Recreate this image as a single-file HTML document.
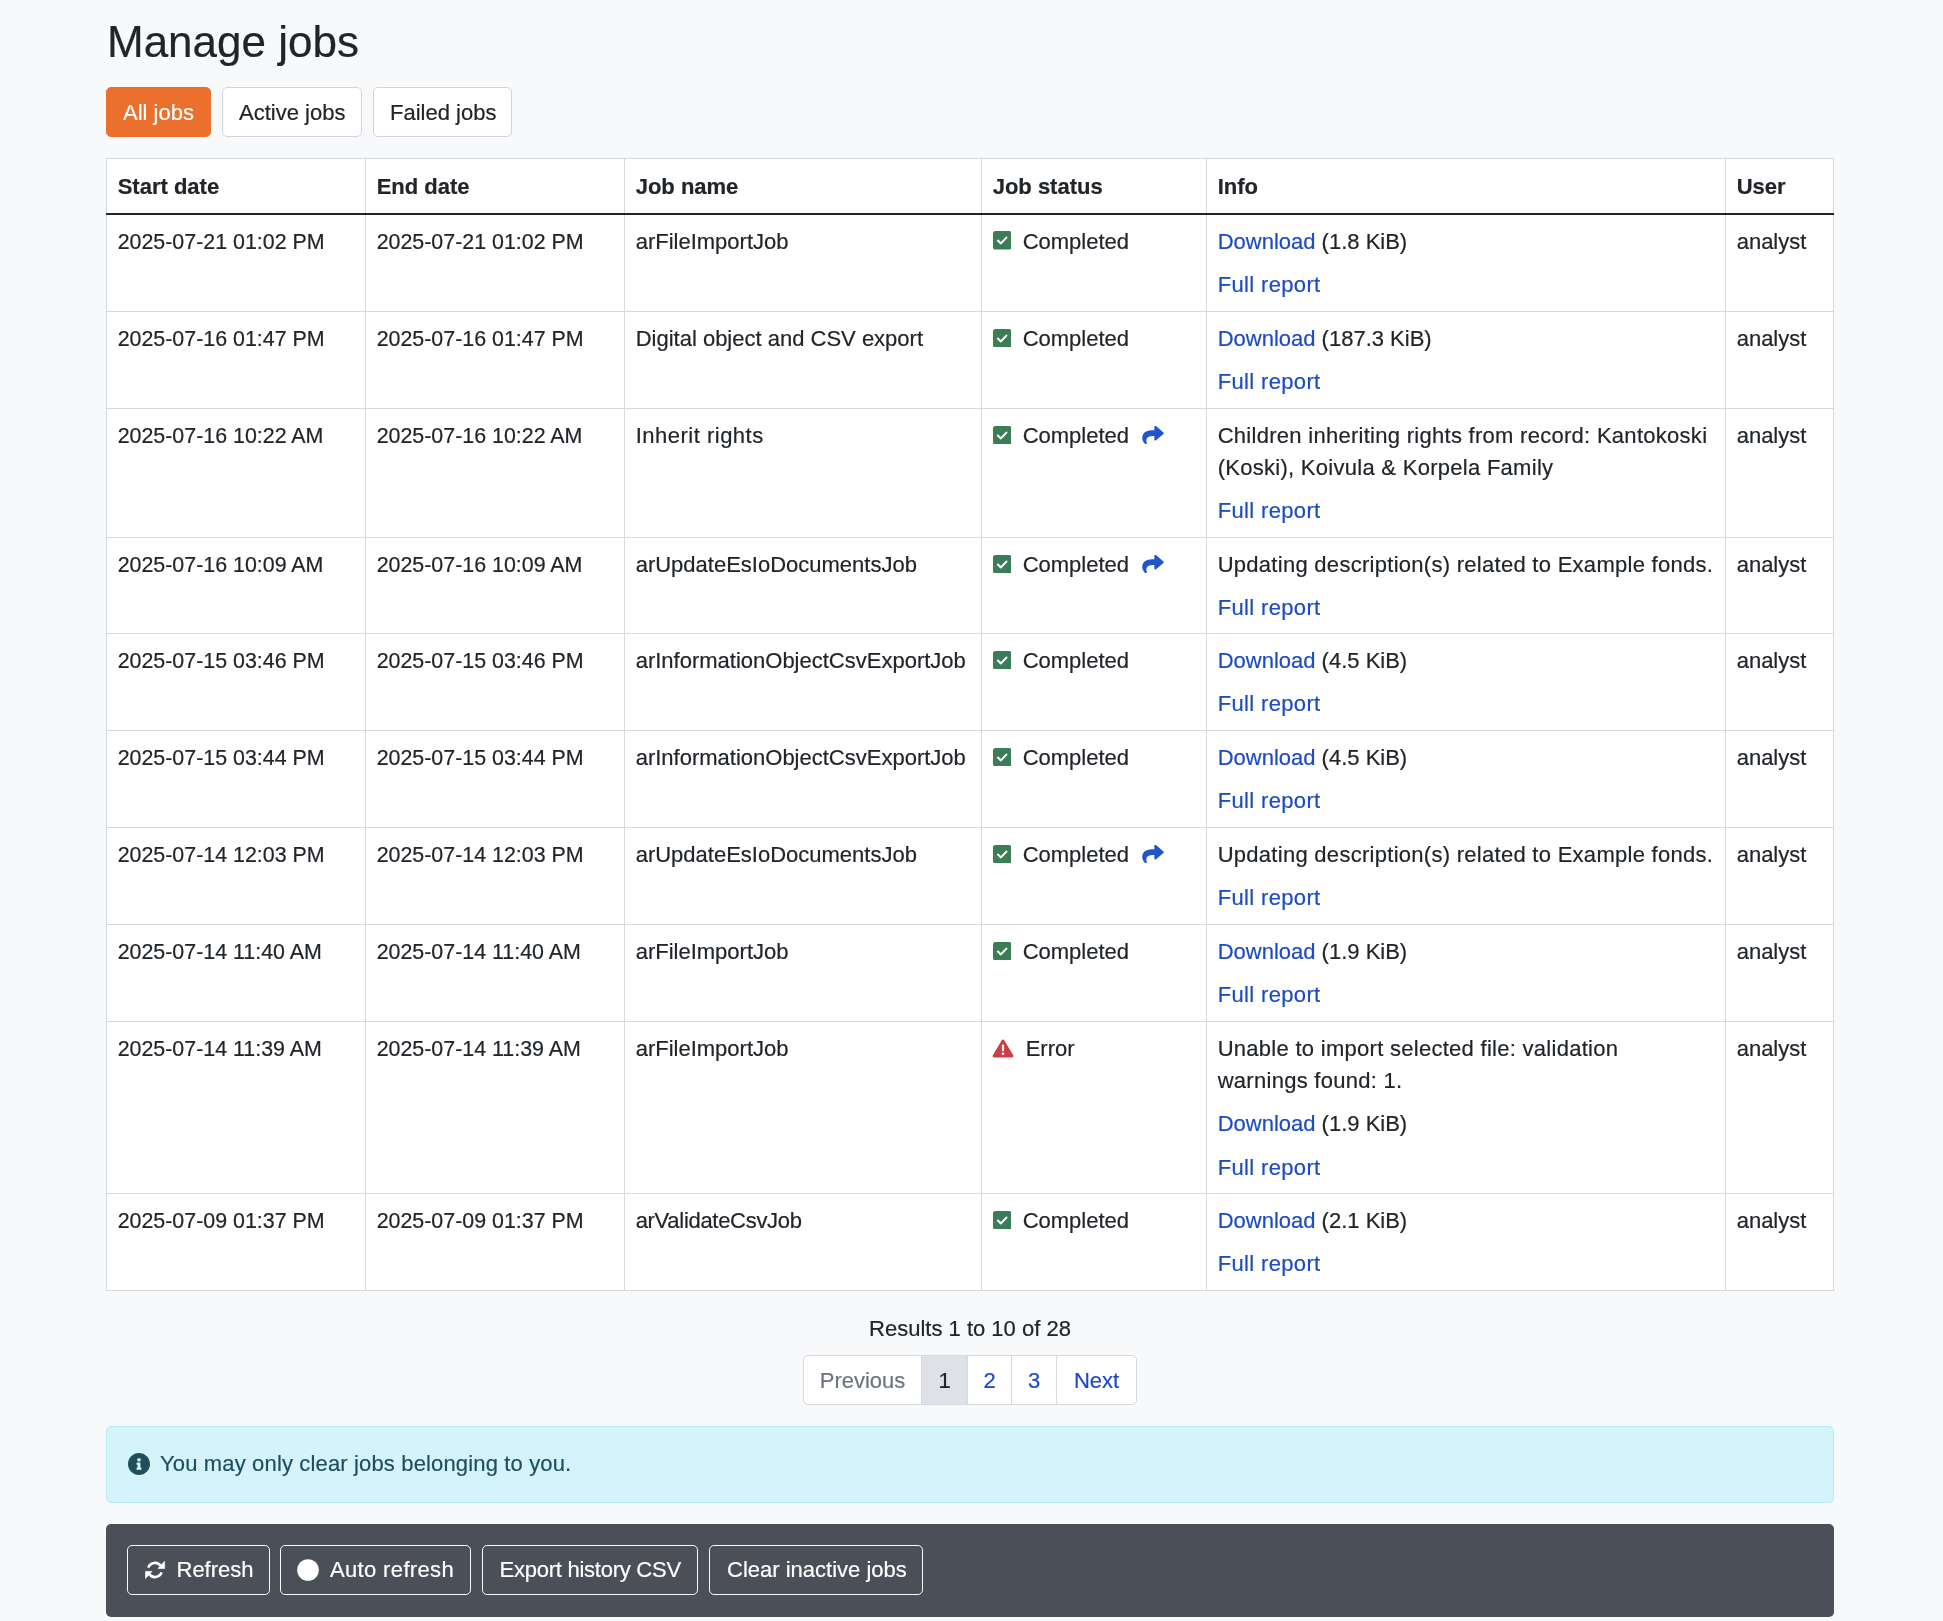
<!DOCTYPE html>
<html>
<head>
<meta charset="utf-8">
<style>
html,body{margin:0;padding:0}
body{will-change:transform;width:1943px;height:1621px;background:#f8f9fa;color:#212529;font-family:"Liberation Sans",sans-serif;font-size:22px;line-height:32px;position:relative;overflow:hidden;-webkit-text-stroke:0.2px currentColor}
.abs{position:absolute}
a{color:#1c4bc3;text-decoration:none}
h1{position:absolute;left:107px;top:12px;margin:0;font-weight:400;font-size:44px;line-height:60px;color:#212529;white-space:nowrap}
.btn{position:absolute;box-sizing:border-box;height:50px;border:1px solid #ced4da;border-radius:5px;background:#fff;line-height:50px;white-space:nowrap}
.btn.active{background:#ec702d;border-color:#ec702d;color:#fff}
.tbl{position:absolute;left:106px;top:158px;border-collapse:collapse;table-layout:fixed;background:#fff}
.tbl td,.tbl th{border:1px solid #d5dadf;padding:11.4px 10.67px 0 10.67px;vertical-align:top;text-align:left;white-space:nowrap}
.tbl th{font-weight:700;border-bottom:2px solid #212529;padding-top:11.67px}
.tbl td.d{font-size:21.4px}
.tbl .it{margin-top:11.1px}
.tbl .it:first-child{margin-top:0}
.msg{letter-spacing:0.28px}
.fr{letter-spacing:0.35px}
.st{position:relative;padding-left:30px}
.st.e{padding-left:33px}
.ico{position:absolute;display:block}
.chk{left:0;top:5.4px}
.err{left:-0.7px;top:5.9px}
.shr{position:relative;display:inline-block;vertical-align:top;left:13px;top:5.4px}
.results{position:absolute;left:106px;width:1728px;top:1313px;text-align:center}
.pg{position:absolute;top:1355px;height:50px;box-sizing:border-box;border:1px solid #d5dadf;background:#fff;line-height:50px;text-align:center}
.alert{position:absolute;left:106px;top:1426px;width:1728px;height:77px;box-sizing:border-box;background:#d4f3fb;border:1px solid #b8ebf7;border-radius:5px;color:#1f4f5e}
.bar{position:absolute;left:106px;top:1524px;width:1728px;height:93px;background:#4b4f58;border-radius:5px}
.obtn{position:absolute;top:1545px;height:50px;box-sizing:border-box;border:1px solid #f8f9fa;border-radius:5px;color:#fff;line-height:48px;white-space:nowrap}
</style>
</head>
<body>
<h1>Manage jobs</h1>

<div class="btn active" style="left:106px;top:87px;width:105px;padding-left:16px">All jobs</div>
<div class="btn" style="left:222px;top:87px;width:140px;padding-left:16px">Active jobs</div>
<div class="btn" style="left:373px;top:87px;width:139px;padding-left:16px">Failed jobs</div>

<table class="tbl" style="width:1727px">
<colgroup>
<col style="width:259px"><col style="width:259px"><col style="width:357px"><col style="width:225px"><col style="width:519px"><col style="width:108px">
</colgroup>
<thead>
<tr style="height:55px"><th>Start date</th><th>End date</th><th>Job name</th><th>Job status</th><th>Info</th><th>User</th></tr>
</thead>
<tbody>
<tr style="height:98px"><td class="d">2025-07-21 01:02 PM</td><td class="d">2025-07-21 01:02 PM</td><td>arFileImportJob</td><td><div class="st"><svg class="ico chk" width="18.5" height="18.5" viewBox="0 0 18.5 18.5"><rect x="0" y="0" width="18.5" height="18.5" rx="2.6" fill="#3b7d54"/><path d="M4.9 9.6 L7.9 12.4 L13.4 6.6" fill="none" stroke="#fff" stroke-width="2.1" stroke-linecap="round" stroke-linejoin="round"/></svg>Completed</div></td><td><div class="it"><a>Download</a> (1.8 KiB)</div><div class="it"><a class="fr">Full report</a></div></td><td>analyst</td></tr>
<tr style="height:97px"><td class="d">2025-07-16 01:47 PM</td><td class="d">2025-07-16 01:47 PM</td><td>Digital object and CSV export</td><td><div class="st"><svg class="ico chk" width="18.5" height="18.5" viewBox="0 0 18.5 18.5"><rect x="0" y="0" width="18.5" height="18.5" rx="2.6" fill="#3b7d54"/><path d="M4.9 9.6 L7.9 12.4 L13.4 6.6" fill="none" stroke="#fff" stroke-width="2.1" stroke-linecap="round" stroke-linejoin="round"/></svg>Completed</div></td><td><div class="it"><a>Download</a> (187.3 KiB)</div><div class="it"><a class="fr">Full report</a></div></td><td>analyst</td></tr>
<tr style="height:129px"><td class="d">2025-07-16 10:22 AM</td><td class="d">2025-07-16 10:22 AM</td><td style="letter-spacing:0.5px">Inherit rights</td><td><div class="st"><svg class="ico chk" width="18.5" height="18.5" viewBox="0 0 18.5 18.5"><rect x="0" y="0" width="18.5" height="18.5" rx="2.6" fill="#3b7d54"/><path d="M4.9 9.6 L7.9 12.4 L13.4 6.6" fill="none" stroke="#fff" stroke-width="2.1" stroke-linecap="round" stroke-linejoin="round"/></svg>Completed<svg class="ico shr" width="22" height="18.5" viewBox="0 0 512 440"><path transform="translate(0,-37)" d="M503.691 189.836L327.687 37.851C312.281 24.546 288 35.347 288 56.015v80.053C127.371 137.907 0 170.1 0 322.326c0 61.441 39.581 122.309 83.333 154.132 13.653 9.931 33.111-2.533 28.077-18.631C66.066 312.814 132.917 274.316 288 272.085V360c0 20.7 24.3 31.453 39.687 18.164l176.004-152c11.071-9.562 11.086-26.753 0-36.328z" fill="#2155cc"/></svg></div></td><td><div class="it msg">Children inheriting rights from record: Kantokoski<br>(Koski), Koivula &amp; Korpela Family</div><div class="it"><a class="fr">Full report</a></div></td><td>analyst</td></tr>
<tr style="height:96px"><td class="d">2025-07-16 10:09 AM</td><td class="d">2025-07-16 10:09 AM</td><td>arUpdateEsIoDocumentsJob</td><td><div class="st"><svg class="ico chk" width="18.5" height="18.5" viewBox="0 0 18.5 18.5"><rect x="0" y="0" width="18.5" height="18.5" rx="2.6" fill="#3b7d54"/><path d="M4.9 9.6 L7.9 12.4 L13.4 6.6" fill="none" stroke="#fff" stroke-width="2.1" stroke-linecap="round" stroke-linejoin="round"/></svg>Completed<svg class="ico shr" width="22" height="18.5" viewBox="0 0 512 440"><path transform="translate(0,-37)" d="M503.691 189.836L327.687 37.851C312.281 24.546 288 35.347 288 56.015v80.053C127.371 137.907 0 170.1 0 322.326c0 61.441 39.581 122.309 83.333 154.132 13.653 9.931 33.111-2.533 28.077-18.631C66.066 312.814 132.917 274.316 288 272.085V360c0 20.7 24.3 31.453 39.687 18.164l176.004-152c11.071-9.562 11.086-26.753 0-36.328z" fill="#2155cc"/></svg></div></td><td><div class="it msg">Updating description(s) related to Example fonds.</div><div class="it"><a class="fr">Full report</a></div></td><td>analyst</td></tr>
<tr style="height:97px"><td class="d">2025-07-15 03:46 PM</td><td class="d">2025-07-15 03:46 PM</td><td>arInformationObjectCsvExportJob</td><td><div class="st"><svg class="ico chk" width="18.5" height="18.5" viewBox="0 0 18.5 18.5"><rect x="0" y="0" width="18.5" height="18.5" rx="2.6" fill="#3b7d54"/><path d="M4.9 9.6 L7.9 12.4 L13.4 6.6" fill="none" stroke="#fff" stroke-width="2.1" stroke-linecap="round" stroke-linejoin="round"/></svg>Completed</div></td><td><div class="it"><a>Download</a> (4.5 KiB)</div><div class="it"><a class="fr">Full report</a></div></td><td>analyst</td></tr>
<tr style="height:97px"><td class="d">2025-07-15 03:44 PM</td><td class="d">2025-07-15 03:44 PM</td><td>arInformationObjectCsvExportJob</td><td><div class="st"><svg class="ico chk" width="18.5" height="18.5" viewBox="0 0 18.5 18.5"><rect x="0" y="0" width="18.5" height="18.5" rx="2.6" fill="#3b7d54"/><path d="M4.9 9.6 L7.9 12.4 L13.4 6.6" fill="none" stroke="#fff" stroke-width="2.1" stroke-linecap="round" stroke-linejoin="round"/></svg>Completed</div></td><td><div class="it"><a>Download</a> (4.5 KiB)</div><div class="it"><a class="fr">Full report</a></div></td><td>analyst</td></tr>
<tr style="height:97px"><td class="d">2025-07-14 12:03 PM</td><td class="d">2025-07-14 12:03 PM</td><td>arUpdateEsIoDocumentsJob</td><td><div class="st"><svg class="ico chk" width="18.5" height="18.5" viewBox="0 0 18.5 18.5"><rect x="0" y="0" width="18.5" height="18.5" rx="2.6" fill="#3b7d54"/><path d="M4.9 9.6 L7.9 12.4 L13.4 6.6" fill="none" stroke="#fff" stroke-width="2.1" stroke-linecap="round" stroke-linejoin="round"/></svg>Completed<svg class="ico shr" width="22" height="18.5" viewBox="0 0 512 440"><path transform="translate(0,-37)" d="M503.691 189.836L327.687 37.851C312.281 24.546 288 35.347 288 56.015v80.053C127.371 137.907 0 170.1 0 322.326c0 61.441 39.581 122.309 83.333 154.132 13.653 9.931 33.111-2.533 28.077-18.631C66.066 312.814 132.917 274.316 288 272.085V360c0 20.7 24.3 31.453 39.687 18.164l176.004-152c11.071-9.562 11.086-26.753 0-36.328z" fill="#2155cc"/></svg></div></td><td><div class="it msg">Updating description(s) related to Example fonds.</div><div class="it"><a class="fr">Full report</a></div></td><td>analyst</td></tr>
<tr style="height:97px"><td class="d">2025-07-14 11:40 AM</td><td class="d">2025-07-14 11:40 AM</td><td>arFileImportJob</td><td><div class="st"><svg class="ico chk" width="18.5" height="18.5" viewBox="0 0 18.5 18.5"><rect x="0" y="0" width="18.5" height="18.5" rx="2.6" fill="#3b7d54"/><path d="M4.9 9.6 L7.9 12.4 L13.4 6.6" fill="none" stroke="#fff" stroke-width="2.1" stroke-linecap="round" stroke-linejoin="round"/></svg>Completed</div></td><td><div class="it"><a>Download</a> (1.9 KiB)</div><div class="it"><a class="fr">Full report</a></div></td><td>analyst</td></tr>
<tr style="height:172px"><td class="d">2025-07-14 11:39 AM</td><td class="d">2025-07-14 11:39 AM</td><td>arFileImportJob</td><td><div class="st e"><svg class="ico err" width="22" height="19" viewBox="0 0 22 19"><path d="M11 0.6 C11.6 0.6 12.1 0.9 12.4 1.4 L21.2 16.3 C21.8 17.4 21.1 18.6 19.8 18.6 L2.2 18.6 C0.9 18.6 0.2 17.4 0.8 16.3 L9.6 1.4 C9.9 0.9 10.4 0.6 11 0.6 Z" fill="#cc3e48"/><rect x="9.9" y="5.6" width="2.2" height="6.6" rx="1" fill="#fff"/><circle cx="11" cy="14.7" r="1.3" fill="#fff"/></svg>Error</div></td><td><div class="it msg">Unable to import selected file: validation<br>warnings found: 1.</div><div class="it"><a>Download</a> (1.9 KiB)</div><div class="it"><a class="fr">Full report</a></div></td><td>analyst</td></tr>
<tr style="height:97px"><td class="d">2025-07-09 01:37 PM</td><td class="d">2025-07-09 01:37 PM</td><td style="letter-spacing:-0.3px">arValidateCsvJob</td><td><div class="st"><svg class="ico chk" width="18.5" height="18.5" viewBox="0 0 18.5 18.5"><rect x="0" y="0" width="18.5" height="18.5" rx="2.6" fill="#3b7d54"/><path d="M4.9 9.6 L7.9 12.4 L13.4 6.6" fill="none" stroke="#fff" stroke-width="2.1" stroke-linecap="round" stroke-linejoin="round"/></svg>Completed</div></td><td><div class="it"><a>Download</a> (2.1 KiB)</div><div class="it"><a class="fr">Full report</a></div></td><td>analyst</td></tr>
</tbody>
</table>

<div class="results">Results 1 to 10 of 28</div>

<div class="pg" style="left:803px;width:119px;border-radius:5px 0 0 5px;color:#6c757d">Previous</div>
<div class="pg" style="left:921px;width:47px;background:#dee2e6;color:#212529">1</div>
<div class="pg" style="left:967px;width:45px;color:#1c4bc3">2</div>
<div class="pg" style="left:1011px;width:46px;color:#1c4bc3">3</div>
<div class="pg" style="left:1056px;width:81px;border-radius:0 5px 5px 0;color:#1c4bc3">Next</div>

<div class="alert">
<svg class="abs" style="left:21px;top:26px" width="22" height="22" viewBox="8 8 496 496"><path fill="#1f4f5e" d="M256 8C119.043 8 8 119.083 8 256c0 136.997 111.043 248 248 248s248-111.003 248-248C504 119.083 392.957 8 256 8zm0 110c23.196 0 42 18.804 42 42s-18.804 42-42 42-42-18.804-42-42 18.804-42 42-42zm56 254c0 6.627-5.373 12-12 12h-88c-6.627 0-12-5.373-12-12v-24c0-6.627 5.373-12 12-12h12v-64h-12c-6.627 0-12-5.373-12-12v-24c0-6.627 5.373-12 12-12h64c6.627 0 12 5.373 12 12v100h12c6.627 0 12 5.373 12 12v24z"/></svg>
<div class="abs" style="left:53px;top:21px;letter-spacing:0.15px">You may only clear jobs belonging to you.</div>
</div>

<div class="bar"></div>
<div class="obtn" style="left:127px;width:143px;padding-left:48.5px"><svg class="abs" style="left:17px;top:14px" width="21" height="21" viewBox="0 0 21 21"><path d="M3.28 7.59 A7.05 7.05 0 0 1 15.68 5.96" fill="none" stroke="#fff" stroke-width="2.7"/><path d="M16.52 12.41 A7.05 7.05 0 0 1 4.12 14.04" fill="none" stroke="#fff" stroke-width="2.7"/><path d="M19.6 1.2 L19.6 8.5 L13 8.5 Z" fill="#fff" stroke="#fff" stroke-width="0.6" stroke-linejoin="round"/><path d="M0.4 11.4 L7 11.4 L0.4 18.6 Z" fill="#fff" stroke="#fff" stroke-width="0.6" stroke-linejoin="round"/></svg>Refresh</div>
<div class="obtn" style="left:280px;width:191px;padding-left:49px;letter-spacing:0.35px"><svg class="abs" style="left:16px;top:13px" width="22" height="22" viewBox="0 0 22 22"><circle cx="11" cy="11" r="10.8" fill="#fff"/></svg>Auto refresh</div>
<div class="obtn" style="left:482px;width:216px;padding-left:16.5px;letter-spacing:-0.25px">Export history CSV</div>
<div class="obtn" style="left:709px;width:214px;padding-left:17px">Clear inactive jobs</div>
</body>
</html>
